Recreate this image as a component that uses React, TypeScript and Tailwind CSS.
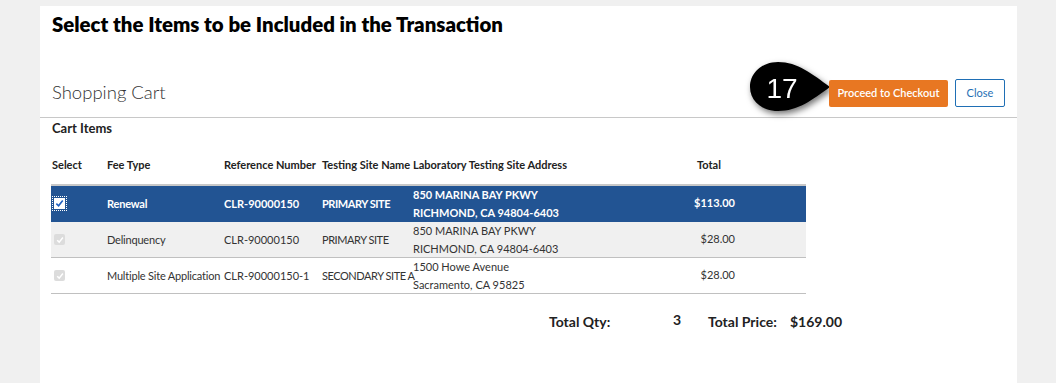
import React from "react";

const rows = [
  { sel: true, fee: "Renewal", ref: "CLR-90000150", site: "PRIMARY SITE", a1: "850 MARINA BAY PKWY", a2: "RICHMOND, CA 94804-6403", total: "$113.00" },
  { sel: false, fee: "Delinquency", ref: "CLR-90000150", site: "PRIMARY SITE", a1: "850 MARINA BAY PKWY", a2: "RICHMOND, CA 94804-6403", total: "$28.00" },
  { sel: false, fee: "Multiple Site Application", ref: "CLR-90000150-1", site: "SECONDARY SITE A", a1: "1500 Howe Avenue", a2: "Sacramento, CA 95825", total: "$28.00" },
];

function Check({ active }: { active: boolean }) {
  if (active) {
    return (
      <div className="w-[11px] h-[11px] bg-white outline-1 outline-dotted outline-white outline-offset-1 flex items-center justify-center">
        <svg width="9" height="9" viewBox="0 0 10 10"><path d="M1.5 5.2 L4 7.6 L8.6 1.8" stroke="#1e5fbf" strokeWidth="1.8" fill="none" /></svg>
      </div>
    );
  }
  return (
    <div className="w-[11px] h-[11px] bg-[#dcdcdc] rounded-[2px] flex items-center justify-center">
      <svg width="8" height="8" viewBox="0 0 10 10"><path d="M1.5 5.2 L4 7.6 L8.6 1.8" stroke="#ffffff" strokeWidth="1.8" fill="none" /></svg>
    </div>
  );
}

export default function App() {
  return (
    <div className="w-[1056px] h-[383px] bg-[#f0f0f0] pt-[6px] pl-[40px] overflow-hidden" style={{ fontFamily: "Lato, 'Liberation Sans', sans-serif" }}>
      <div className="w-[977px] h-[377px] bg-white">
        <div className="pl-[12px] pt-[6px] h-[60px]">
          <h1 className="text-[20.4px] font-extrabold text-black leading-[24px]">Select the Items to be Included in the Transaction</h1>
        </div>
        <div className="flex items-center h-[52px] border-b border-[#c8c8c8] relative">
          <div className="pl-[12px] text-[18.5px] font-light text-[#333] leading-none mt-[1px]">Shopping Cart</div>
          <div className="ml-auto flex items-center gap-[7px] pr-[12px] mt-[3px]">
            <div className="relative">
              <svg width="90" height="60" viewBox="0 0 90 60" className="absolute left-[-79px] top-[-17px]" style={{ filter: "drop-shadow(2px 3px 3px rgba(0,0,0,0.55))" }}>
                <path d="M80 25 C62 12 48 0 28 0 C12 0 0 11 0 25 C0 39 12 49 28 49 C48 49 62 38 80 25 Z" fill="#000" />
                <text x="32" y="36" textAnchor="middle" fill="#fff" fontSize="28" fontFamily="'Liberation Sans', Arial, sans-serif">17</text>
              </svg>
              <button className="relative h-[27px] w-[119px] bg-[#e87722] text-white text-[11px] font-semibold rounded-[2px]">Proceed to Checkout</button>
            </div>
            <button className="h-[28px] w-[50px] border border-[#1f6fb5] text-[#1f6fb5] text-[11px] rounded-[2px] bg-white">Close</button>
          </div>
        </div>
        <div className="pl-[12px] pt-[2px] text-[13px] font-bold text-[#222] leading-[16px]">Cart Items</div>
        <div className="ml-[11px] w-[755px] mt-[21px] text-[11px] text-[#333]">
          <div className="flex h-[29px] items-start font-bold text-[#222] border-b-2 border-[#c8c8c8]">
            <div className="w-[56px] pl-[1px]">Select</div>
            <div className="w-[117px]">Fee Type</div>
            <div className="w-[98px]">Reference Number</div>
            <div className="w-[91px]">Testing Site Name</div>
            <div className="w-[284px]">Laboratory Testing Site Address</div>
            <div className="flex-1">Total</div>
          </div>
          {rows.map((r, i) => (
            <div
              key={i}
              className={
                "flex h-[36px] items-center border-b " +
                (i === 0 ? "bg-[#225493] text-white font-bold border-[#225493]" : i === 1 ? "bg-[#f0f0f0] border-[#c0c0c0]" : "bg-white border-[#c0c0c0]")
              }
            >
              <div className="w-[56px] shrink-0 pl-[3px]"><Check active={r.sel} /></div>
              <div className="w-[117px] shrink-0 whitespace-nowrap tracking-[-0.2px] mt-[1px]">{r.fee}</div>
              <div className="w-[98px] shrink-0 whitespace-nowrap mt-[1px]">{r.ref}</div>
              <div className="w-[91px] shrink-0 whitespace-nowrap tracking-[-0.45px] mt-[1px]">{r.site}</div>
              <div className="w-[262px] shrink-0 leading-[18px] mt-[1px]">
                <div>{r.a1}</div>
                <div>{r.a2}</div>
              </div>
              <div className="w-[60px] shrink-0 text-right whitespace-nowrap">{r.total}</div>
            </div>
          ))}
          <div className="flex items-center font-bold text-[14px] text-[#222] mt-[19px] h-[16px] whitespace-nowrap">
            <div className="ml-[498px] w-[124px] shrink-0">Total Qty:</div>
            <div className="w-[35px] shrink-0 mb-[3px]">3</div>
            <div className="w-[82px] shrink-0">Total Price:</div>
            <div className="shrink-0">$169.00</div>
          </div>
        </div>
      </div>
    </div>
  );
}
